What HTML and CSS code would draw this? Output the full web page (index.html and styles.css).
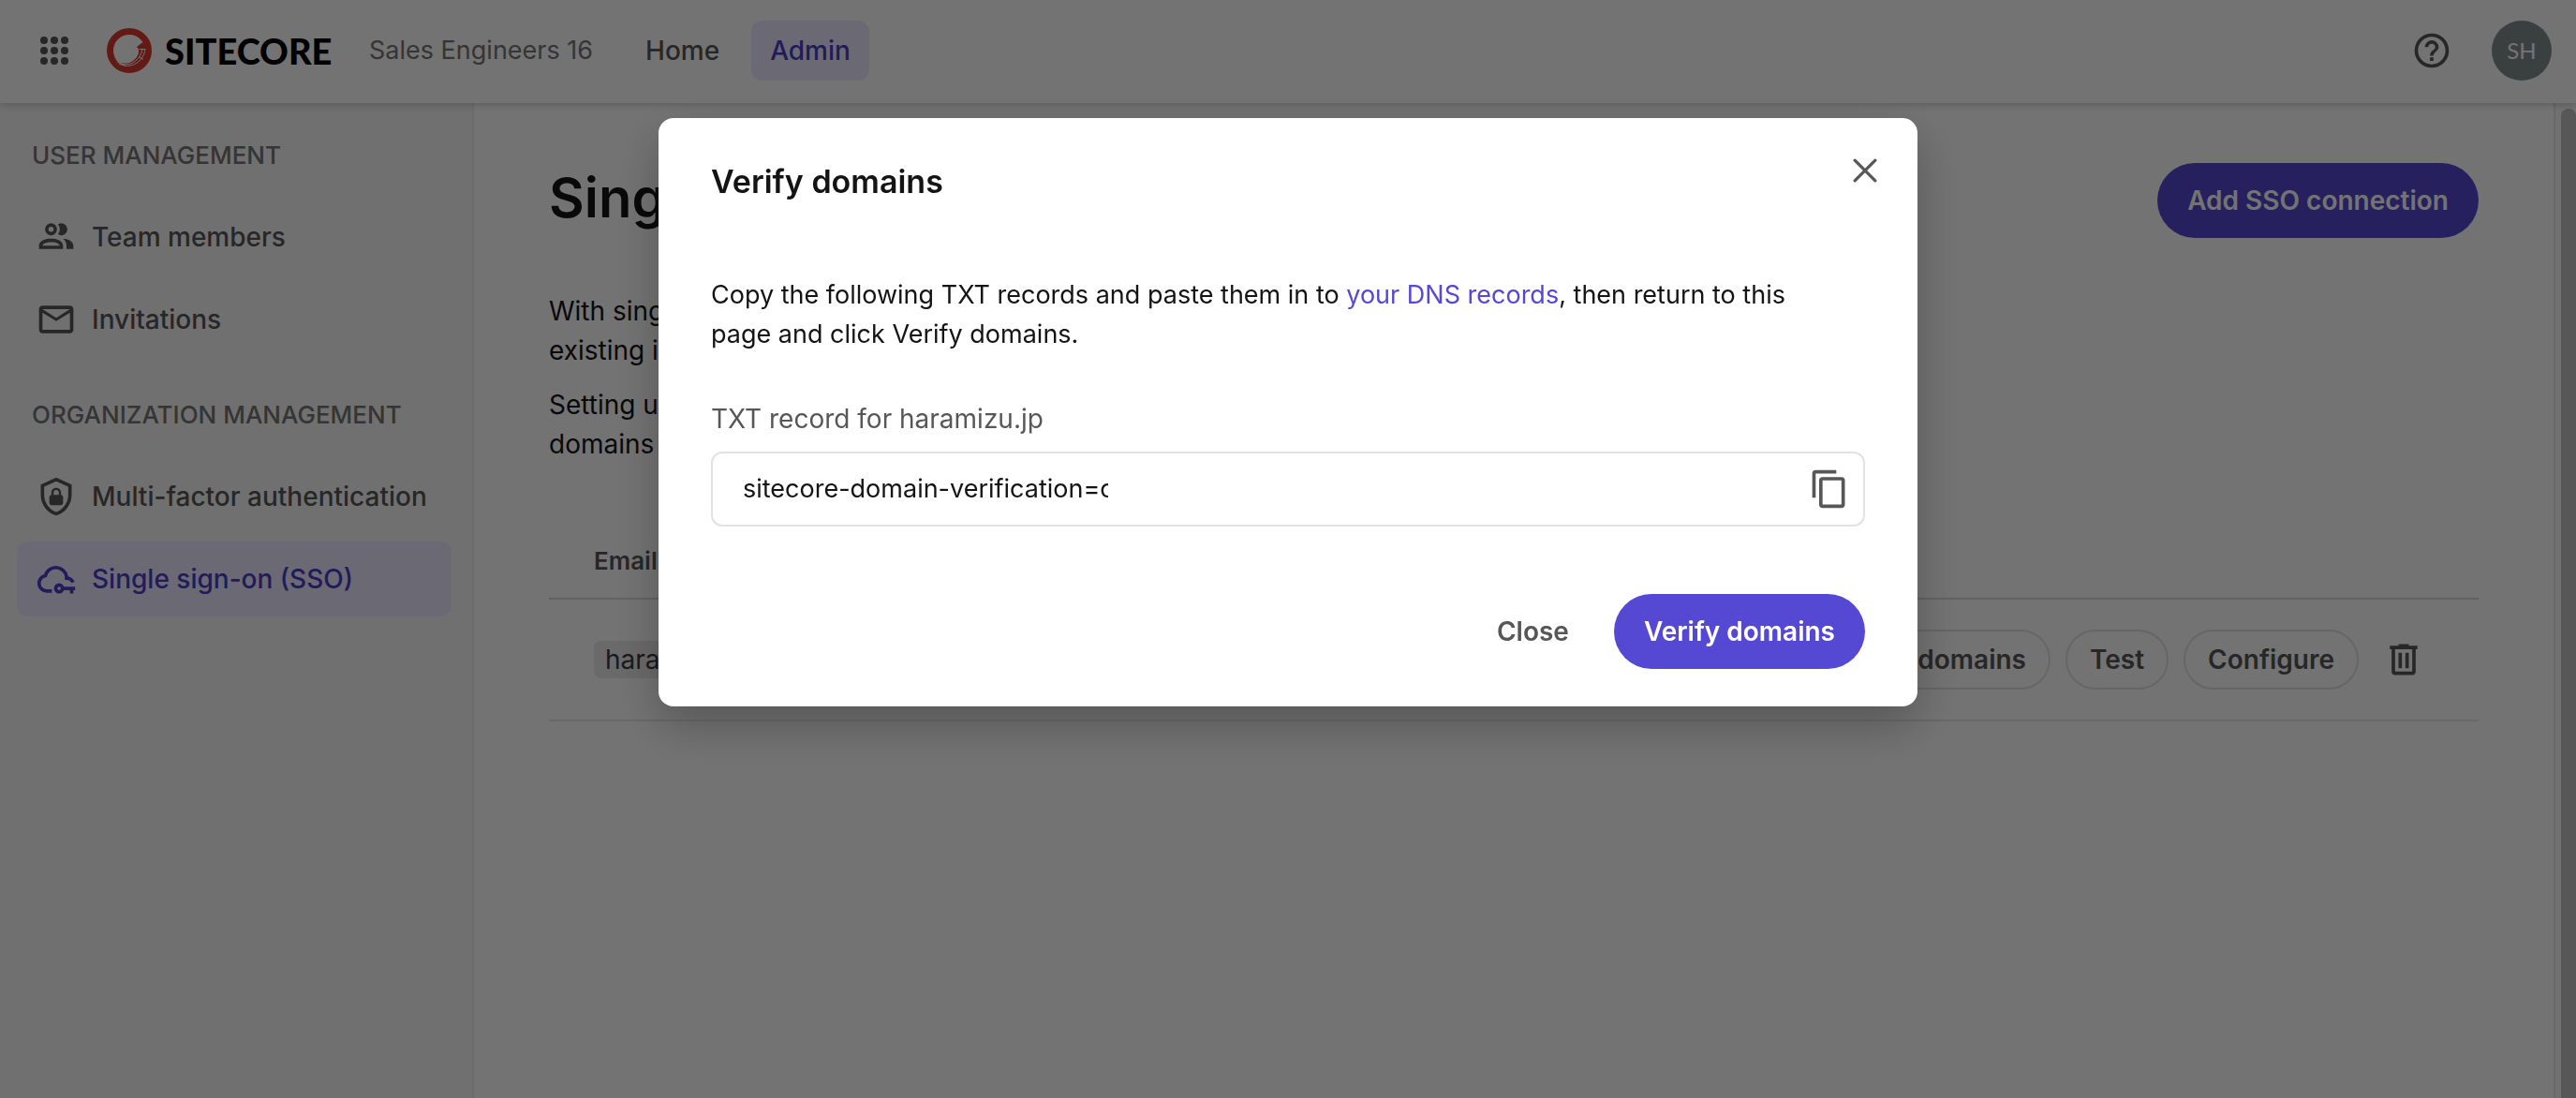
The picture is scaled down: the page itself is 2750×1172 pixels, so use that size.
FILE: index.html
```html
<!DOCTYPE html>
<html lang="en">
<head>
<meta charset="utf-8">
<title>Single sign-on (SSO) - Sitecore</title>
<link rel="stylesheet" href="styles.css">
</head>
<body>
<div class="app">
  <header class="topbar">
    <button class="icon-button apps" type="button" aria-label="Apps">
      <svg class="icon" viewBox="0 0 44 44"><g fill="currentColor"><circle cx="11" cy="11" r="4"/><circle cx="22" cy="11" r="4"/><circle cx="33" cy="11" r="4"/><circle cx="11" cy="22" r="4"/><circle cx="22" cy="22" r="4"/><circle cx="33" cy="22" r="4"/><circle cx="11" cy="33" r="4"/><circle cx="22" cy="33" r="4"/><circle cx="33" cy="33" r="4"/></g></svg>
    </button>
    <a class="brand" href="#">
      <svg class="brand-mark" viewBox="0 0 48 48"><circle cx="24" cy="24" r="20.500" fill="none" stroke="#dc3a30" stroke-width="7"/><path d="M32 20l6.500-5 3 5v9l-4 7-7 5h-9l-9-5c9 4 18 0 21-8 1-3 1-6-1.500-8z" fill="#dc3a30"/><path d="M34.500 22.500h6.500M34 30.500l5 3M10 34c10 5 20 1 23-8M11 36c13 7 25-1 27-14M13 38c13 7 27-3 28-16" fill="none" stroke="#fff" stroke-width="1"/></svg>
      <span class="brand-name">SITECORE</span>
    </a>
    <span class="org-name">Sales Engineers 16</span>
    <nav class="topnav">
      <a class="topnav-link" href="#">Home</a>
      <a class="topnav-link active" href="#" aria-current="page">Admin</a>
    </nav>
    <div class="account">
      <button class="icon-button" type="button" aria-label="Help">
        <svg class="icon" viewBox="0 0 24 24"><path fill="currentColor" d="M11 18h2v-2h-2v2m1-16A10 10 0 0 0 2 12a10 10 0 0 0 10 10 10 10 0 0 0 10-10A10 10 0 0 0 12 2m0 18c-4.410 0-8-3.590-8-8s3.590-8 8-8 8 3.590 8 8-3.590 8-8 8m0-14a4 4 0 0 0-4 4h2a2 2 0 0 1 2-2 2 2 0 0 1 2 2c0 2-3 1.750-3 5h2c0-2.250 3-2.500 3-5a4 4 0 0 0-4-4z"/></svg>
      </button>
      <button class="avatar" type="button" aria-label="Account SH">SH</button>
    </div>
  </header>

  <div class="body">
    <nav class="sidebar">
      <h2 class="side-title">USER MANAGEMENT</h2>
      <a class="side-link" href="#">
        <svg class="icon" viewBox="0 0 24 24"><path fill="currentColor" d="M13.070 10.410a5 5 0 0 0 0-5.820A3.390 3.390 0 0 1 15 4a3.500 3.500 0 0 1 0 7 3.390 3.390 0 0 1-1.930-.590M5.500 7.500A3.500 3.500 0 1 1 9 11a3.500 3.500 0 0 1-3.500-3.500m2 0A1.500 1.500 0 1 0 9 6a1.500 1.500 0 0 0-1.500 1.500M16 17v2H2v-2s0-4 7-4 7 4 7 4m-2 0c-.140-.780-1.330-2-5-2s-4.930 1.310-5 2m11.950-4A5.320 5.320 0 0 1 18 17v2h4v-2s0-3.630-6.060-4z"/></svg>
        Team members
      </a>
      <a class="side-link" href="#">
        <svg class="icon" viewBox="0 0 24 24"><path fill="currentColor" d="M22 6c0-1.100-.9-2-2-2H4c-1.100 0-2 .9-2 2v12c0 1.100.9 2 2 2h16c1.100 0 2-.9 2-2V6m-2 0l-8 5-8-5h16m0 12H4V8l8 5 8-5v10z"/></svg>
        Invitations
      </a>
      <h2 class="side-title">ORGANIZATION MANAGEMENT</h2>
      <a class="side-link" href="#">
        <svg class="icon" viewBox="0 0 24 24"><path fill="currentColor" d="M21 11c0 5.550-3.840 10.740-9 12-5.160-1.260-9-6.450-9-12V5l9-4 9 4v6m-9 10c3.750-1 7-5.460 7-9.780V6.300l-7-3.120L5 6.300v4.920C5 15.540 8.250 20 12 21m2.800-10V9.500C14.800 8.100 13.400 7 12 7S9.200 8.100 9.200 9.500V11c-.6 0-1.200.6-1.200 1.200v3.500c0 .7.600 1.300 1.200 1.300h5.500c.7 0 1.300-.6 1.300-1.200v-3.500c0-.7-.6-1.300-1.200-1.300m-1.300 0h-3V9.500c0-.8.700-1.300 1.500-1.300s1.500.5 1.500 1.300V11z"/></svg>
        Multi-factor authentication
      </a>
      <a class="side-link active" href="#" aria-current="page">
        <svg class="icon" viewBox="0 0 24 24"><path fill="none" stroke="currentColor" stroke-width="2" d="M9.500 19H6.500a4.500 4.500 0 0 1-.8-8.930A6.300 6.300 0 0 1 18 10.500v1c1.900 0 3.200 1 3.800 2.500"/><path fill="none" stroke="currentColor" stroke-width="2" d="M15.600 17.500H23M21 17.500v3"/><circle cx="13.700" cy="17.500" r="2" fill="none" stroke="currentColor" stroke-width="2"/></svg>
        Single sign-on (SSO)
      </a>
    </nav>

    <main class="main">
      <div class="page-head">
        <h1 class="page-title">Single sign-on</h1>
        <button class="button primary" type="button">Add SSO connection</button>
      </div>
      <div class="intro">
        <p>With single sign-on, your team members can log in using their<br>existing identity provider.</p>
        <p>Setting up single sign-on requires you to verify the email<br>domains that you own.</p>
      </div>
      <table class="connections">
        <thead>
          <tr><th scope="col">Email domains</th><th scope="col" aria-label="Actions"></th></tr>
        </thead>
        <tbody>
          <tr>
            <td><span class="tag">haramizu.jp</span></td>
            <td>
              <div class="row-actions">
                <button class="button outline" type="button">Verify domains</button>
                <button class="button outline" type="button">Test</button>
                <button class="button outline" type="button">Configure</button>
                <button class="icon-button" type="button" aria-label="Delete">
                  <svg class="icon" viewBox="0 0 24 24"><path fill="currentColor" d="M9 3v1H4v2h1v13a2 2 0 0 0 2 2h10a2 2 0 0 0 2-2V6h1V4h-5V3H9M7 6h10v13H7V6m2 2v9h2V8H9m4 0v9h2V8h-2z"/></svg>
                </button>
              </div>
            </td>
          </tr>
        </tbody>
      </table>
    </main>
    <div class="scroll-track"><div class="scroll-thumb"></div></div>
  </div>
</div>

<div class="overlay">
  <section class="dialog" role="dialog" aria-modal="true" aria-labelledby="dialog-title">
    <header class="dialog-head">
      <h2 class="dialog-title" id="dialog-title">Verify domains</h2>
      <button class="icon-button dialog-close" type="button" aria-label="Close dialog">
        <svg class="icon close-icon" viewBox="0 0 24 24"><path stroke="currentColor" stroke-width="3" stroke-linecap="round" d="M2 2l20 20M22 2L2 22"/></svg>
      </button>
    </header>
    <div class="dialog-body">
      <p class="dialog-text">Copy the following TXT records and paste them in to <a class="link" href="#">your DNS records</a>, then return to this page and click Verify domains.</p>
      <label class="field-label" for="txt-record">TXT record for haramizu.jp</label>
      <div class="field">
        <input class="field-input" id="txt-record" type="text" readonly value="sitecore-domain-verification=c">
        <button class="icon-button" type="button" aria-label="Copy">
          <svg class="icon" viewBox="0 0 24 24"><path fill="currentColor" d="M19 21H8V7h11m0-2H8a2 2 0 0 0-2 2v14a2 2 0 0 0 2 2h11a2 2 0 0 0 2-2V7a2 2 0 0 0-2-2m-3-4H4a2 2 0 0 0-2 2v14h2V3h12V1z"/></svg>
        </button>
      </div>
    </div>
    <footer class="dialog-foot">
      <button class="button ghost" type="button">Close</button>
      <button class="button primary" type="button">Verify domains</button>
    </footer>
  </section>
</div>
</body>
</html>
```
FILE: styles.css
```css
* {
  box-sizing: border-box;
}

body {
  margin: 0;
  font-family: Inter, "Liberation Sans", sans-serif;
  font-size: 28px;
  line-height: 42px;
  color: #141414;
  background: #fff;
}

h1,
h2,
p {
  margin: 0;
}

a {
  color: inherit;
  text-decoration: none;
}

button,
input {
  font: inherit;
  color: inherit;
}

.app {
  display: flex;
  flex-direction: column;
  min-height: 100vh;
}

.icon {
  display: block;
  flex: none;
  width: 44px;
  height: 44px;
}

.icon-button {
  display: flex;
  align-items: center;
  justify-content: center;
  width: 64px;
  height: 64px;
  padding: 0;
  border: 0;
  background: none;
  color: #575757;
}

/* Top bar */
.topbar {
  position: relative;
  display: flex;
  align-items: center;
  height: 110px;
  padding: 0 26px;
  padding-bottom: 2px;
  background: #fff;
  box-shadow: 0 2px 8px rgba(0, 0, 0, 0.2);
}

.brand {
  display: flex;
  align-items: center;
  gap: 14px;
  margin-left: 24px;
}

.brand-mark {
  width: 48px;
  height: 48px;
}

.brand-name {
  min-width: 184px;
  font-family: Lato, "Liberation Sans", sans-serif;
  font-size: 38px;
  font-weight: 900;
  color: #000;
}

.org-name {
  margin-left: 34px;
  font-size: 27px;
  color: #757575;
}

.topnav {
  display: flex;
  gap: 14px;
  margin-left: 36px;
}

.topnav-link {
  padding: 11px 20px;
  border-radius: 12px;
  font-weight: 500;
  color: #575757;
}

.topnav-link.active {
  background: #eee9ff;
  color: #4b3fc5;
}

.account {
  display: flex;
  align-items: center;
  gap: 32px;
  margin-left: auto;
}

.avatar {
  width: 64px;
  height: 64px;
  padding: 0;
  border: 0;
  border-radius: 50%;
  background: #818e8e;
  color: #fff;
  font-family: Lato, "Liberation Sans", sans-serif;
  font-size: 24px;
}

/* Sidebar */
.body {
  display: flex;
  flex: 1;
}

.sidebar {
  display: flex;
  flex-direction: column;
  gap: 8px;
  width: 506px;
  padding: 36px 22px 0 18px;
  border-right: 2px solid #efefef;
  background: #f8f8f8;
}

.side-title {
  margin-bottom: 19px;
  padding-left: 16px;
  font-size: 26px;
  line-height: 40px;
  font-weight: 500;
  color: #757575;
}

.side-link + .side-title {
  margin-top: 34px;
}

.side-link {
  display: flex;
  align-items: center;
  gap: 16px;
  height: 80px;
  padding: 0 20px;
  border-radius: 12px;
  font-weight: 500;
  color: #575757;
}

.side-link.active {
  background: #eee9ff;
  color: #4b3fc5;
}

/* Page */
.main {
  flex: 1;
  padding: 64px 80px 0;
}

.page-head {
  display: flex;
  align-items: flex-start;
  justify-content: space-between;
}

.page-title {
  font-size: 58px;
  line-height: 74px;
  font-weight: 600;
}

.button {
  height: 80px;
  padding: 0 32px;
  border: 0;
  border-radius: 40px;
  font-weight: 600;
  white-space: nowrap;
}

.button.primary {
  background: #5548d2;
  color: #fff;
}

.button.ghost {
  background: none;
  color: #575757;
}

.button.outline {
  height: 64px;
  padding: 0 24px;
  border: 2px solid #e2e2e2;
  background: none;
  color: #575757;
}

.intro {
  display: grid;
  gap: 16px;
  margin-top: 57px;
}

.connections {
  width: 100%;
  margin-top: 64px;
  border-collapse: collapse;
}

.connections th {
  height: 80px;
  padding: 0 48px;
  border-bottom: 2px solid #dadada;
  font-size: 26px;
  font-weight: 600;
  text-align: left;
  color: #575757;
}

.connections td {
  height: 130px;
  padding: 0 48px;
  border-bottom: 2px solid #e8e8e8;
}

.tag {
  display: inline-block;
  padding: 0 12px;
  border-radius: 8px;
  background: #ebebeb;
  line-height: 40px;
  color: #3b3b3b;
}

.row-actions {
  display: flex;
  align-items: center;
  justify-content: flex-end;
  gap: 16px;
}

.scroll-track {
  width: 24px;
  padding: 6px 0 0 6px;
  border-left: 2px solid #e8e8e8;
  background: #fafafa;
}

.scroll-thumb {
  height: 100%;
  border-radius: 8px 8px 0 0;
  background: #c1c1c1;
}

/* Dialog */
.overlay {
  position: fixed;
  inset: 0;
  display: flex;
  align-items: flex-start;
  justify-content: center;
  padding: 126px 32px;
  background: rgba(0, 0, 0, 0.55);
}

.dialog {
  width: 1344px;
  padding: 24px 56px 40px;
  border-radius: 16px;
  background: #fff;
  box-shadow: 0 20px 50px rgba(0, 0, 0, 0.25);
}

.dialog-head {
  display: flex;
  align-items: flex-start;
  justify-content: space-between;
}

.dialog-title {
  margin-top: 16px;
  font-size: 34px;
  line-height: 56px;
  font-weight: 600;
}

.dialog-close {
  margin-right: -32px;
}

.close-icon {
  width: 26px;
  height: 26px;
}

.dialog-body {
  padding-top: 72px;
}

.dialog-text {
  padding-right: 40px;
  font-size: 27px;
}

.link {
  color: #5548d2;
}

.field-label {
  display: block;
  margin-top: 48px;
  color: #575757;
}

.field {
  display: flex;
  align-items: center;
  justify-content: space-between;
  height: 80px;
  margin-top: 14px;
  padding: 0 4px 0 32px;
  border: 2px solid #e2e2e2;
  border-radius: 12px;
  font-size: 27px;
}

.field-input {
  width: 390px;
  padding: 0;
  border: 0;
  outline: 0;
  background: none;
}

.dialog-foot {
  display: flex;
  justify-content: flex-end;
  gap: 16px;
  margin-top: 72px;
}
```
